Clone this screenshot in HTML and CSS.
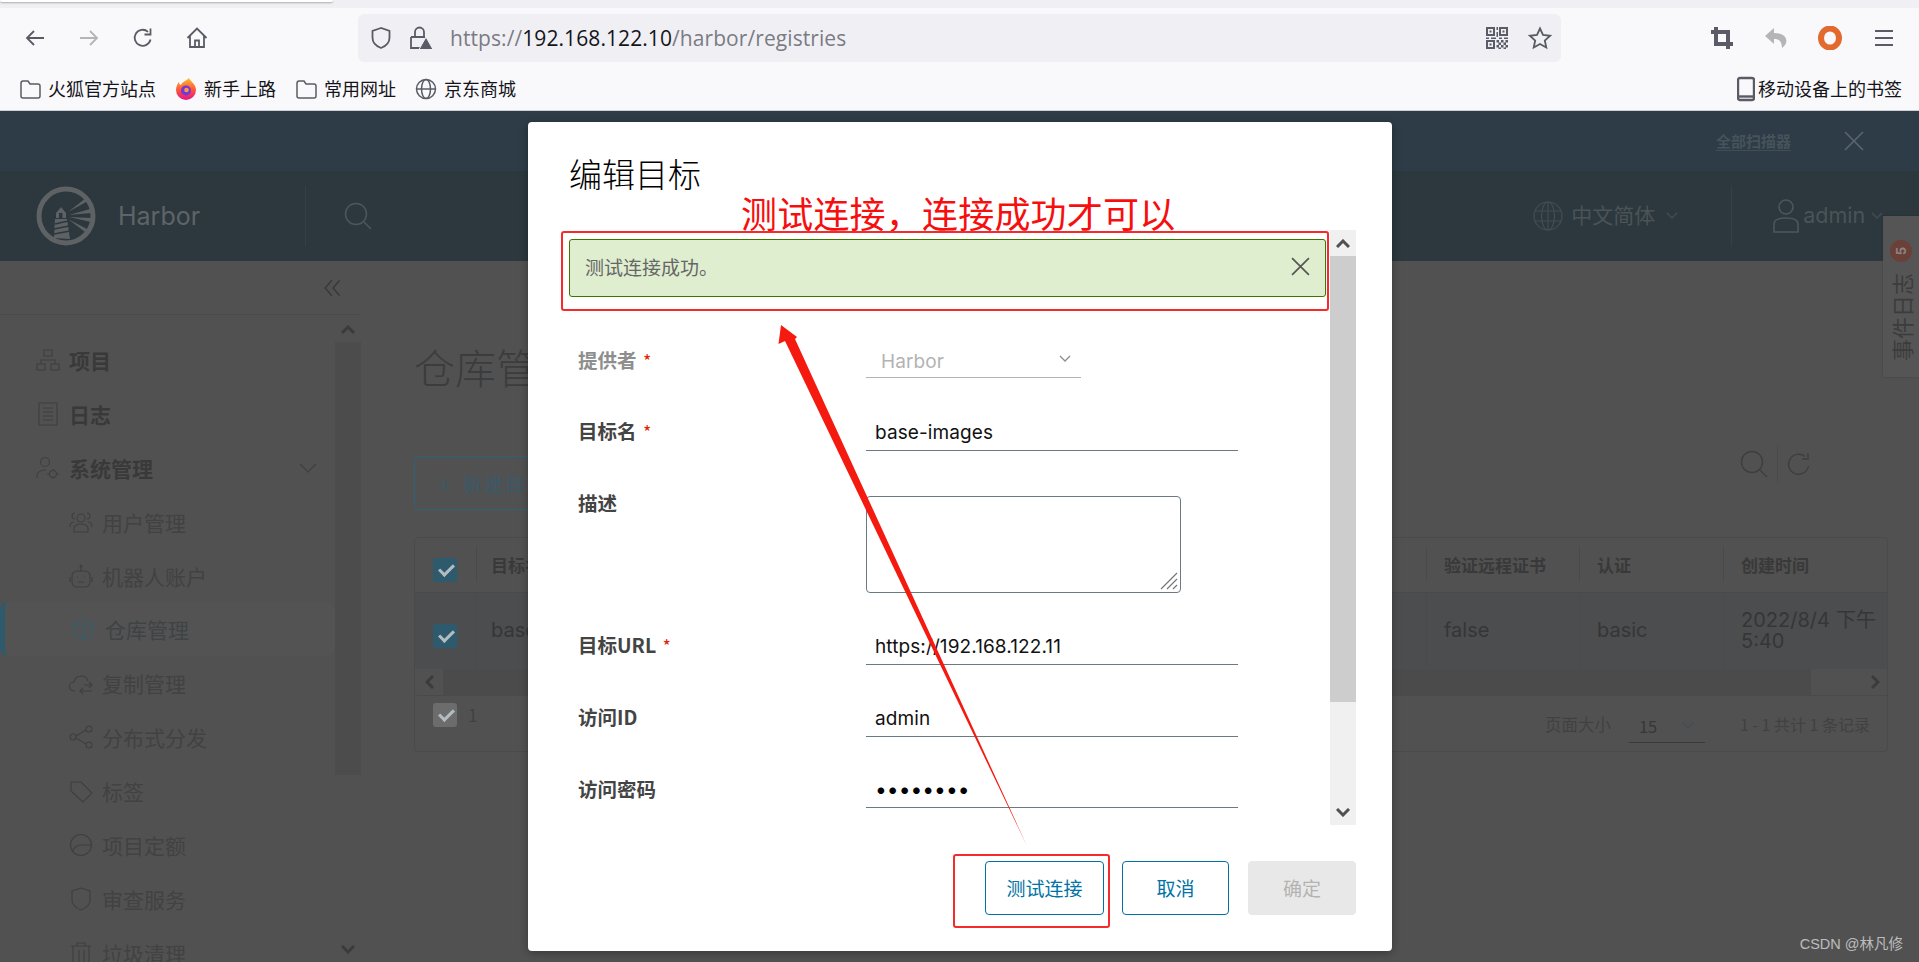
FILE: index.html
```html
<!DOCTYPE html>
<html lang="zh-CN">
<head>
	<meta charset="UTF-8"/>
	<title>Harbor</title>
	<link rel="stylesheet" href="styles.css">
</head>
<body>

<div class="tabstrip"><div class="tab"></div></div>

<!-- Browser toolbar -->
<div class="toolbar">
	<svg class="tb-icon back" viewBox="0 0 24 24"><path d="M21 12H4M11 5l-7 7 7 7"/></svg>
	<svg class="tb-icon fwd" viewBox="0 0 24 24"><path d="M3 12h17M13 5l7 7-7 7"/></svg>
	<svg class="tb-icon reload" viewBox="0 0 24 24"><path d="M19.5 13.5A8 8 0 1 1 17 5.8M19.5 2.5v6h-6"/></svg>
	<svg class="tb-icon home" viewBox="0 0 24 24"><path d="M2.5 12 12 2.500l9.500 9.500M5 10v11h14V10M10 21v-6.500h4V21"/></svg>
	<div class="urlbar">
		<svg class="url-shield" viewBox="0 0 24 24"><path d="M12 2 3.500 4.800v7C3.500 17 8 20.500 12 22c4-1.500 8.500-5 8.500-10.200v-7z"/></svg>
		<svg class="url-lock" viewBox="0 0 24 24"><path d="M6 11V6a4.500 4.500 0 0 1 9 0v5M2 11h14M2 11v11h9"/><path class="fill" d="M17 11 24 23.500H10z"/></svg>
		<span class="url-text"><span class="url-dim">https://</span>192.168.122.10<span class="url-dim">/harbor/registries</span></span>
		<svg class="url-qr" viewBox="0 0 22 22"><path class="fill" d="M0 0h9v9H0zM2 2v5h5V2zM3.500 3.500h2v2h-2zM13 0h9v9h-9zM15 2v5h5V2zM16.500 3.500h2v2h-2zM0 13h9v9H0zM2 15v5h5v-5zM3.500 16.500h2v2h-2zM10.500 0h1.500v3h-1.500zM10.500 5h1.500v5h-1.500zM0 10.500h3V12H0zM5 10.500h5V12H5zM13 10.500h3V12h-3zM18 10.500h4V12h-4zM10.500 13H13v2.500h-2.500zM15 13h2.500v2.500H15zM19.500 13H22v2.500h-2.500zM12.500 15.500H15V18h-2.500zM17.500 15.500H20V18h-2.500zM10.500 18H13v2.500h-2.500zM15 18h2.500v2.500H15zM19.500 18H22v2.500h-2.500zM12.500 20.500H15V22h-2.500zM17.500 20.500H20V22h-2.500z"/></svg>
		<svg class="url-star" viewBox="0 0 24 24"><path d="m12 2.500 3 6.500 7 .8-5.200 4.700 1.500 7L12 18l-6.300 3.500 1.500-7L2 9.800 9 9z"/></svg>
	</div>
	<svg class="tb-solid crop" viewBox="0 0 24 24"><path d="M6 1v17h17M1 6h17v17" fill="none" stroke="#5b5b66" stroke-width="4"/></svg>
	<svg class="tb-solid undo" viewBox="0 0 24 24"><path d="M10 2 1 10l9 8v-5c5 0 8 2 8 9 4-3 5-6 4-9-1-4-6-6-12-6z" fill="#b4b4b9"/></svg>
	<svg class="tb-solid ublock" viewBox="0 0 24 24"><ellipse cx="12" cy="12" rx="9" ry="9.500" fill="none" stroke="#e36a2e" stroke-width="6"/></svg>
	<svg class="tb-solid menu" viewBox="0 0 24 24"><path d="M3 5h18M3 12h18M3 19h18" fill="none" stroke="#5b5b66" stroke-width="2"/></svg>
</div>

<!-- Bookmarks -->
<div class="bookmarks">
	<span class="bm"><svg viewBox="0 0 22 22"><path d="M2 5.500c0-1.500.8-2.500 2-2.500h5l2 3h8c1.200 0 2 .8 2 2v10c0 1.200-.8 2-2 2H4c-1.200 0-2-.8-2-2z"/></svg>火狐官方站点</span>
	<span class="bm"><svg viewBox="0 0 22 22" class="firefox"><defs><linearGradient id="fx" x1="0" y1="0" x2="0" y2="1"><stop offset="0" stop-color="#ffbd2e"/><stop offset=".5" stop-color="#ff5a36"/><stop offset="1" stop-color="#e31587"/></linearGradient></defs><path d="M14 0c1 3 7 6 7 12a10 10 0 0 1-20 0C1 8 3 5 4 4c0 2 1 3 2 3 1-3 5-4 8-7z" fill="url(#fx)" stroke="none"/><circle cx="11" cy="12.500" r="5" fill="#7139d8" stroke="none"/><circle cx="11.500" cy="12" r="2.300" fill="#ff9640" stroke="none"/></svg>新手上路</span>
	<span class="bm"><svg viewBox="0 0 22 22"><path d="M2 5.500c0-1.500.8-2.500 2-2.500h5l2 3h8c1.200 0 2 .8 2 2v10c0 1.200-.8 2-2 2H4c-1.200 0-2-.8-2-2z"/></svg>常用网址</span>
	<span class="bm"><svg viewBox="0 0 22 22"><circle cx="11" cy="11" r="9.500"/><ellipse cx="11" cy="11" rx="4.500" ry="9.500"/><path d="M1.500 11h19"/></svg>京东商城</span>
	<span class="bm bm-mobile"><svg viewBox="0 0 18 26"><path class="mob" d="M3 2h12a2 2 0 0 1 2 2v18a2 2 0 0 1-2 2H3a2 2 0 0 1-2-2V4a2 2 0 0 1 2-2z"/><path class="mob" d="M1 20.500h16" /></svg>移动设备上的书签</span>
</div>

<!-- Harbor behind the dialog -->
<div class="banner">
	<a class="banner-link">全部扫描器</a>
	<svg class="banner-close" viewBox="0 0 20 20"><path d="M1 1l18 18M19 1 1 19"/></svg>
</div>

<header class="app-header">
	<svg class="logo" viewBox="0 0 60 60">
		<circle cx="30" cy="30" r="27" fill="none" stroke="#5e6264" stroke-width="5"/>
		<path d="M20 27l5-6 5 6v5h-10zM19 33h12l3 20-16-1z" fill="#5e6264"/>
		<rect x="23" y="27" width="3.500" height="5" fill="#2c383f"/>
		<path d="M19 38l13-3M18 43l15-3M18 48l16-3" stroke="#2c383f" stroke-width="1.500"/>
		<path d="M32 26 50 12l2 3zM33 29l21-6 1 4zM33 31l22 1v4zM32 33l19 10-2 3z" fill="#5e6264"/>
	</svg>
	<span class="brand">Harbor</span>
	<span class="hdr-divider"></span>
	<svg class="hdr-search" viewBox="0 0 28 28"><circle cx="12" cy="12" r="10.500"/><path d="m20 20 7 7"/></svg>
	<svg class="hdr-globe" viewBox="0 0 30 30"><circle cx="15" cy="15" r="14"/><ellipse cx="15" cy="15" rx="6.500" ry="14"/><path d="M15 1v28M2 10h26M2 20h26"/></svg>
	<span class="hdr-lang">中文简体</span>
	<svg class="chev hdr-chev1" viewBox="0 0 12 8"><path d="m1 1 5 5 5-5"/></svg>
	<span class="hdr-divider second"></span>
	<svg class="hdr-user" viewBox="0 0 26 36"><circle cx="13" cy="9" r="7"/><path d="M1 34v-8c0-4 5-6 12-6s12 2 12 6v8z"/></svg>
	<span class="hdr-admin">admin</span>
	<svg class="chev hdr-chev2" viewBox="0 0 12 8"><path d="m1 1 5 5 5-5"/></svg>
</header>

<div class="layout">
	<aside class="sidebar">
		<div class="collapse-row">
			<svg viewBox="0 0 18 18"><path d="M8 2 2 9l6 7M15 2 9 9l6 7"/></svg>
		</div>
		<nav class="nav">
			<a class="nav-item top"><svg viewBox="0 0 24 24"><path d="M8 2h8v6H8zM1 16h8v6H1zM15 16h8v6h-8zM5 16v-4h14v4"/></svg>项目</a>
			<a class="nav-item top"><svg viewBox="0 0 24 24"><path d="M3 1h18v22H3zM7 6h10M7 10h10M7 14h10M7 18h10"/></svg>日志</a>
			<a class="nav-item top"><svg viewBox="0 0 24 24"><circle cx="9" cy="6" r="4.500"/><path d="M1 22v-3c0-3 4-5 9-5M17 13v2M17 21v2M13 18h-2M23 18h-2"/><circle cx="17" cy="18" r="3.500"/></svg>系统管理<svg class="nav-chev" viewBox="0 0 18 10"><path d="m1 1 8 8 8-8"/></svg></a>
			<a class="nav-item sub"><svg viewBox="0 0 24 24"><circle cx="12" cy="8" r="4"/><path d="M5 22v-4c0-2 3-4 7-4s7 2 7 4v4zM6 3a3 3 0 0 0 0 6M18 3a3 3 0 0 1 0 6M1 17c0-3 1-5 4-5M23 17c0-3-1-5-4-5"/></svg>用户管理</a>
			<a class="nav-item sub"><svg viewBox="0 0 24 24"><rect x="3" y="7" width="18" height="16" rx="5"/><path d="M12 7V3M1 13v5M23 13v5M9 18h6M8 13h1M15 13h1"/><circle cx="12" cy="2" r="1"/></svg>机器人账户</a>
			<a class="nav-item sub active"><svg viewBox="0 0 24 24"><path d="M12 1 2 6v12l10 5 10-5V6zM2 6l10 5 10-5M12 11v12"/></svg>仓库管理</a>
			<a class="nav-item sub"><svg viewBox="0 0 24 24"><path d="M6 20H5a4 4 0 0 1 0-9c1-4 4-6 7-6 3 0 6 2 7 5M23 20H11M14 17l-3 3 3 3M23 14H15M20 11l3 3-3 3"/></svg>复制管理</a>
			<a class="nav-item sub"><svg viewBox="0 0 24 24"><circle cx="4" cy="12" r="3"/><circle cx="20" cy="4" r="3"/><circle cx="20" cy="20" r="3"/><path d="m7 11 10-6M7 13l10 6"/></svg>分布式分发</a>
			<a class="nav-item sub"><svg viewBox="0 0 24 24"><path d="M2 3h10l11 11-9 9L2 12zM6.500 7.500h.1"/></svg>标签</a>
			<a class="nav-item sub"><svg viewBox="0 0 24 24"><circle cx="12" cy="12" r="10.500"/><path d="M3 19c2-5 5-7 9-7h10"/></svg>项目定额</a>
			<a class="nav-item sub"><svg viewBox="0 0 24 24"><path d="M12 1 3 4v9c0 5 4 8 9 10 5-2 9-5 9-10V4z"/></svg>审查服务</a>
			<a class="nav-item sub"><svg viewBox="0 0 24 24"><path d="M2 5h20M8 5V2h8v3M4 5v18M20 5v18M10 9v14M15 9v14"/></svg>垃圾清理</a>
		</nav>
		<div class="side-scroll">
			<svg class="bold-chev" viewBox="0 0 14 9"><path d="m1 8 6-6 6 6"/></svg>
			<div class="side-thumb"></div>
			<svg class="bold-chev low" viewBox="0 0 14 9"><path d="m1 1 6 6 6-6"/></svg>
		</div>
	</aside>

	<main class="content">
		<h1 class="page-title">仓库管理</h1>
		<div class="actions">
			<button class="new-btn"><span class="plus">+</span>新建目标</button>
			<span class="actions-right">
				<svg class="act-search" viewBox="0 0 28 28"><circle cx="12" cy="12" r="10.500"/><path d="m20 20 7 7"/></svg>
				<span class="act-divider"></span>
				<svg class="act-refresh" viewBox="0 0 24 24"><path d="M21.500 14A10 10 0 1 1 18 4.500M21 1v6h-6"/></svg>
			</span>
		</div>

		<div class="grid">
			<div class="grid-head">
				<div class="cell cell-check"><span class="check"></span></div>
				<div class="cell cell-name">目标名</div>
				<div class="cell">验证远程证书</div>
				<div class="cell">认证</div>
				<div class="cell">创建时间</div>
			</div>
			<div class="grid-row">
				<div class="cell cell-check"><span class="check"></span></div>
				<div class="cell cell-name">base-images</div>
				<div class="cell">false</div>
				<div class="cell">basic</div>
				<div class="cell">2022/8/4 下午 5:40</div>
			</div>
			<div class="grid-scroll">
				<span class="gs-btn"><svg class="bold-chev" viewBox="0 0 9 14"><path d="M8 1 2 7l6 6"/></svg></span>
				<span class="gs-thumb"></span>
				<span class="gs-btn end"><svg class="bold-chev" viewBox="0 0 9 14"><path d="m1 1 6 6-6 6"/></svg></span>
			</div>
			<div class="grid-foot">
				<span class="check grey"></span>
				<span class="foot-count">1</span>
				<span class="foot-right">
					页面大小
					<span class="page-size">15<svg class="chev" viewBox="0 0 12 8"><path d="m1 1 5 5 5-5"/></svg></span>
					<span class="foot-total">1 - 1 共计 1 条记录</span>
				</span>
			</div>
		</div>
	</main>
</div>

<aside class="event-tab">
	<span class="event-badge">5</span>
	<span class="event-text">事件日志</span>
</aside>

<!-- Dialog -->
<section class="modal">
	<h2 class="modal-title">编辑目标</h2>
	<div class="modal-body">
		<div class="modal-scroll">
			<div class="alert">
				<span>测试连接成功。</span>
				<svg viewBox="0 0 18 18"><path d="M1 1l16 16M17 1 1 17"/></svg>
			</div>
			<form class="form">
				<div class="form-row first">
					<label class="form-label">提供者 <i>*</i></label>
					<div class="select-wrap">
						<select class="select" disabled><option>Harbor</option></select>
						<svg class="chev" viewBox="0 0 12 8"><path d="m1 1 5 5 5-5"/></svg>
					</div>
				</div>
				<div class="form-row name-row">
					<label class="form-label dark">目标名 <i>*</i></label>
					<input class="input" type="text" value="base-images"/>
				</div>
				<div class="form-row area-row">
					<label class="form-label dark">描述</label>
					<div class="area-wrap">
						<textarea class="area"></textarea>
						<svg class="grip" viewBox="0 0 20 20"><path d="M2 18 18 2M8 18 18 8M14 18l4-4"/></svg>
					</div>
				</div>
				<div class="form-row">
					<label class="form-label dark">目标URL <i>*</i></label>
					<input class="input" type="text" value="https://192.168.122.11"/>
				</div>
				<div class="form-row">
					<label class="form-label dark">访问ID</label>
					<input class="input" type="text" value="admin"/>
				</div>
				<div class="form-row pass-row">
					<label class="form-label dark">访问密码</label>
					<input class="input pass" type="password" value="12345678"/>
				</div>
			</form>
		</div>
		<div class="modal-bar">
			<span class="bar-btn"><svg class="bold-chev" viewBox="0 0 14 9"><path d="m1 8 6-6 6 6"/></svg></span>
			<span class="bar-thumb"></span>
			<span class="bar-btn low"><svg class="bold-chev" viewBox="0 0 14 9"><path d="m1 1 6 6 6-6"/></svg></span>
		</div>
	</div>
	<div class="modal-foot">
		<button class="btn">测试连接</button>
		<button class="btn narrow">取消</button>
		<button class="btn wide disabled">确定</button>
	</div>
</section>

<!-- Red marks drawn on the screenshot -->
<div class="note">测试连接，连接成功才可以</div>
<div class="mark mark-alert"></div>
<div class="mark mark-btn"></div>
<svg class="arrow" viewBox="0 0 1919 962"><path d="M781 325 797 337 795 339 1027 846 785 341 778.500 344z"/></svg>

<div class="watermark">CSDN @林凡修</div>

</body>
</html>
```

FILE: styles.css
```css
* {
    box-sizing: border-box;
}

html, body {
    margin: 0;
    height: 100%;
}

body {
    position: relative;
    width: 1919px;
    height: 962px;
    overflow: hidden;
    background-color: #515151;
    font-family: "Noto Sans CJK SC", "Noto Sans", sans-serif;
    color: #15141a;
}

svg {
    display: block;
    flex: none;
}

a {
    text-decoration: none;
}

/* Browser chrome */
.tabstrip {
    height: 8px;
    background-color: #f0f0f4;
}

.tab {
    width: 333px;
    height: 2px;
    background: #fff;
    border-radius: 0 0 4px 4px;
    box-shadow: 0 1px 2px rgba(0, 0, 0, 0.3);
}

.toolbar {
    display: flex;
    align-items: center;
    height: 62px;
    padding: 6px 0 8px 23px;
    background-color: #f9f9fb;
}

.tb-icon {
    width: 24px;
    height: 24px;
    margin-right: 30px;
    fill: none;
    stroke: #5b5b66;
    stroke-width: 1.8;
}

.tb-icon.fwd {
    stroke: #b4b4b9;
}

.tb-icon.home {
    margin-right: 0;
}

.urlbar {
    display: flex;
    align-items: center;
    width: 1203px;
    height: 48px;
    margin-left: 149px;
    padding-left: 11px;
    background-color: #f0f0f4;
    border-radius: 6px;
}

.url-shield, .url-lock, .url-star {
    width: 24px;
    height: 24px;
    fill: none;
    stroke: #5b5b66;
    stroke-width: 1.8;
}

.url-lock {
    margin-left: 16px;
}

.url-lock .fill {
    fill: #5b5b66;
    stroke: #f0f0f4;
    stroke-width: 1;
}

.url-text {
    margin-left: 17px;
    font-family: "Open Sans", sans-serif;
    font-size: 21px;
    letter-spacing: 0.08px;
    white-space: nowrap;
}

.url-dim {
    color: #7b7b84;
}

.url-qr {
    width: 22px;
    height: 22px;
    margin-left: auto;
    fill: #5b5b66;
    fill-rule: evenodd;
}

.url-star {
    margin: 0 9px 0 20px;
}

.tb-solid {
    width: 24px;
    height: 24px;
    margin-left: 30px;
}

.tb-solid.crop {
    margin-left: 149px;
}

.bookmarks {
    display: flex;
    align-items: flex-start;
    height: 41px;
    padding: 5px 17px 0 19px;
    background-color: #f9f9fb;
    border-bottom: 1px solid #cfcfd8;
    font-size: 18px;
    line-height: 27px;
}

.bm {
    display: flex;
    align-items: center;
    gap: 7px;
    margin-right: 19px;
    white-space: nowrap;
}

.bm svg {
    width: 22px;
    height: 22px;
    fill: none;
    stroke: #5b5b66;
    stroke-width: 1.5;
}

.bm-mobile {
    gap: 3px;
    margin: 0 0 0 auto;
}

.bm-mobile svg {
    width: 18px;
    height: 26px;
    stroke-width: 2.4;
}

/* Harbor header, dimmed by the dialog backdrop */
.banner {
    display: flex;
    align-items: center;
    justify-content: flex-end;
    height: 60px;
    padding: 0 55px 0 0;
    background-color: #2d3c46;
}

.banner-link {
    margin-right: 53px;
    font-size: 15px;
    font-weight: 700;
    line-height: 18px;
    border-bottom: 1px solid #414e56;
    color: #46535b;
}

.banner-close {
    width: 20px;
    height: 20px;
    fill: none;
    stroke: #5b666d;
    stroke-width: 1.6;
}

.app-header {
    display: flex;
    align-items: center;
    height: 90px;
    padding-left: 36px;
    background-color: #2c383e;
    color: #4a5358;
}

.logo {
    width: 60px;
    height: 60px;
}

.brand {
    margin-left: 22px;
    font-family: "Inter", sans-serif;
    font-size: 25px;
    color: #5e6467;
}

.hdr-divider {
    width: 1px;
    height: 60px;
    margin-left: 105px;
    background-color: #344047;
}

.hdr-divider.second {
    margin-left: 53px;
}

.hdr-search {
    width: 28px;
    height: 28px;
    margin-left: 38px;
    fill: none;
    stroke: #4d565b;
    stroke-width: 1.5;
}

.hdr-globe {
    width: 30px;
    height: 30px;
    margin-left: 1161px;
    fill: none;
    stroke: #434d52;
    stroke-width: 1.2;
}

.hdr-lang {
    margin: -4px 0 0 8px;
    font-size: 21px;
}

.chev {
    width: 12px;
    height: 8px;
    fill: none;
    stroke: #434d52;
    stroke-width: 1.3;
}

.hdr-chev1 {
    margin-left: 11px;
}

.hdr-user {
    width: 26px;
    height: 36px;
    margin-left: 41px;
    fill: none;
    stroke: #4d565b;
    stroke-width: 1.6;
}

.hdr-admin {
    margin: -2px 0 0 4px;
    font-family: "Inter", sans-serif;
    font-size: 21.5px;
}

.hdr-chev2 {
    margin-left: 6px;
}

/* Left navigation and content */
.layout {
    display: flex;
    height: 701px;
    overflow: hidden;
}

.sidebar {
    position: relative;
    width: 361px;
    flex: none;
    color: #3d3d3d;
}

.collapse-row {
    display: flex;
    align-items: center;
    justify-content: flex-end;
    height: 54px;
    padding-right: 18px;
    border-bottom: 1px solid #4a4a4a;
}

.collapse-row svg {
    width: 20px;
    height: 20px;
    fill: none;
    stroke: #3a3a3a;
    stroke-width: 1.4;
}

.nav {
    width: 335px;
    padding-top: 18px;
}

.nav-item {
    display: flex;
    align-items: center;
    height: 53.9px;
    white-space: nowrap;
}

.nav-item svg {
    width: 24px;
    height: 24px;
    fill: none;
    stroke: #3f3f3f;
    stroke-width: 1.1;
}

.nav-item.top {
    gap: 9px;
    padding-left: 36px;
    font-size: 21px;
    font-weight: 700;
    color: #393939;
}

.nav-item.sub {
    gap: 9px;
    padding-left: 69px;
    font-size: 21px;
    color: #424242;
}

.nav-item.active {
    padding-left: 67px;
    background-color: #525352;
    border-left: 5px solid #2f5a6e;
    border-radius: 8px;
    color: #3f4345;
}

.nav-item.active svg {
    width: 22px;
    height: 24px;
    margin-right: 2px;
    stroke: #2f6277;
    stroke-width: 1;
}

.nav-item svg.nav-chev {
    width: 18px;
    height: 10px;
    margin-left: auto;
    margin-right: 18px;
}

.side-scroll {
    position: absolute;
    top: 54px;
    right: 0;
    bottom: 0;
    width: 26px;
    padding-top: 10px;
}

.side-thumb {
    height: 433px;
    margin-top: 8px;
    background-color: #4c4c4c;
}

.bold-chev {
    width: 14px;
    height: 9px;
    margin: 0 auto;
    fill: none;
    stroke: #3b3b3b;
    stroke-width: 3;
}

.side-scroll .low {
    margin-top: 170px;
}

.content {
    flex: 1;
    padding: 0 31px 0 53px;
}

.page-title {
    height: 146px;
    margin: 0;
    padding-top: 75px;
    font-size: 41px;
    font-weight: 300;
    line-height: 60px;
    color: #3c3c3c;
}

.actions {
    position: relative;
    display: flex;
    align-items: flex-start;
    justify-content: space-between;
    height: 54px;
    margin-top: 49px;
}

.new-btn {
    display: flex;
    align-items: center;
    height: 54px;
    padding: 0 22px;
    background: none;
    border: 1px solid #30617a;
    border-radius: 4px;
    font-family: inherit;
    font-size: 19px;
    letter-spacing: 2px;
    color: #3a5a6a;
}

.plus {
    margin-right: 9px;
    font-size: 28px;
    font-weight: 300;
    line-height: 1;
}

.actions-right {
    display: flex;
    align-items: center;
    margin: -10px 77px 0 0;
}

.act-search {
    width: 28px;
    height: 28px;
    fill: none;
    stroke: #3e3e3e;
    stroke-width: 1.4;
}

.act-divider {
    width: 1px;
    height: 36px;
    margin: 0 9px;
    background-color: #4a4a4a;
}

.act-refresh {
    width: 24px;
    height: 24px;
    fill: none;
    stroke: #3e3e3e;
    stroke-width: 1.4;
}

.grid {
    width: 1474px;
    margin-top: 27px;
    border: 1px solid #4a4a4a;
    border-radius: 4px;
    overflow: hidden;
}

.grid-head, .grid-row {
    display: grid;
    grid-template-columns: 61px 950px 153px 144px 1fr;
    align-items: center;
}

.grid-head {
    height: 55px;
    padding-bottom: 2px;
    border-bottom: 1px solid #4a4a4a;
    font-size: 17px;
    font-weight: 700;
    color: #393939;
}

.grid-row {
    height: 76px;
    padding-bottom: 1px;
    background-color: #4b4d4f;
    font-family: "Inter", sans-serif;
    font-size: 20px;
    line-height: 21px;
    color: #363636;
}

.cell {
    display: flex;
    align-items: center;
    height: 36px;
    padding-left: 17px;
    border-left: 1px solid #4a4a4a;
}

.grid-row .cell {
    height: 100%;
}

.cell.cell-name {
    padding-left: 14px;
}

.cell-check {
    padding: 11px 0 0 18px;
    border-left: none;
}

.check {
    position: relative;
    display: block;
    flex: none;
    width: 24px;
    height: 24px;
    background-color: #2e5a6e;
    border-radius: 3px;
}

.check::after {
    content: "";
    position: absolute;
    left: 6px;
    top: 6px;
    width: 12px;
    height: 6px;
    border-left: 3px solid #b3bcc0;
    border-bottom: 3px solid #b3bcc0;
    transform: rotate(-45deg);
}

.check.grey {
    align-self: flex-start;
    margin-top: 7px;
    background-color: #6c6c6c;
}

.grid-scroll {
    display: flex;
    height: 27px;
    border-bottom: 1px solid #4a4a4a;
}

.gs-btn {
    display: flex;
    align-items: center;
    justify-content: center;
    width: 28px;
}

.gs-btn.end {
    width: 76px;
    justify-content: flex-end;
    padding-right: 7px;
}

.gs-btn svg {
    width: 9px;
    height: 14px;
    margin: 0;
}

.gs-thumb {
    flex: 1;
    background-color: #4b4b4b;
}

.grid-foot {
    display: flex;
    align-items: center;
    height: 55px;
    padding: 0 17px 0 18px;
    font-size: 16.5px;
    color: #414141;
}

.foot-count {
    align-self: flex-start;
    margin: 6px 0 0 11px;
    font-size: 17px;
}

.foot-right {
    display: flex;
    align-items: center;
    margin-left: auto;
}

.foot-total {
    font-size: 16px;
}

.page-size {
    display: flex;
    align-items: center;
    justify-content: space-between;
    width: 76px;
    height: 32px;
    margin: 6px 35px 0 18px;
    padding: 0 11px 0 10px;
    border-bottom: 1px solid #3a3a3a;
    color: #373737;
}

.event-tab {
    position: absolute;
    top: 216px;
    right: 0;
    display: flex;
    flex-direction: column;
    align-items: center;
    gap: 11px;
    width: 36px;
    height: 161px;
    padding-top: 24px;
    background-color: #555;
    box-shadow: 0 0 2px rgba(0, 0, 0, 0.2);
    color: #3c3c3c;
}

.event-badge {
    display: flex;
    align-items: center;
    justify-content: center;
    width: 22px;
    height: 22px;
    border-radius: 50%;
    background-color: #6b4038;
    font-family: "Inter", sans-serif;
    font-size: 13px;
    font-weight: 700;
    color: #8c8480;
    transform: rotate(-90deg);
}

.event-text {
    writing-mode: vertical-rl;
    text-orientation: sideways;
    transform: rotate(180deg);
    font-size: 22px;
    line-height: 24px;
}

/* Dialog */
.modal {
    position: absolute;
    top: 122px;
    left: 528px;
    width: 864px;
    height: 829px;
    padding: 0 36px 0 33px;
    background-color: #fff;
    border-radius: 4px;
    box-shadow: 0 2px 8px rgba(0, 0, 0, 0.3);
}

.modal-title {
    height: 108px;
    margin: 0;
    padding: 28px 0 0 8px;
    font-size: 33px;
    font-weight: 300;
    line-height: 46px;
    color: #000;
}

.modal-body {
    display: flex;
    height: 595px;
}

.modal-scroll {
    flex: 1;
    padding: 9px 4px 0 8px;
}

.modal-bar {
    display: flex;
    flex-direction: column;
    width: 26px;
    background-color: #f0f0f0;
}

.bar-btn {
    display: flex;
    align-items: center;
    justify-content: center;
    height: 26px;
    flex: none;
}

.bar-btn .bold-chev {
    stroke: #505050;
}

.bar-btn.low {
    margin-top: auto;
}

.bar-thumb {
    height: 446px;
    background-color: #cdcdcd;
}

.alert {
    display: flex;
    align-items: center;
    justify-content: space-between;
    height: 58px;
    padding: 0 15px 4px 15px;
    background-color: #dfeecf;
    border: 1px solid #3d7500;
    border-radius: 3px;
    font-size: 19px;
    color: #666;
}

.alert svg {
    width: 19px;
    height: 19px;
    fill: none;
    stroke: #565656;
    stroke-width: 1.6;
}

.form {
    display: flex;
    flex-direction: column;
    gap: 36px;
    padding: 45px 0 0 9px;
}

.form-row {
    display: flex;
    align-items: center;
    height: 36px;
}

.form-row.name-row {
    margin-top: 1px;
}

.form-row.area-row {
    align-items: flex-start;
    height: 97px;
    margin-top: 9px;
}

.form-row.pass-row {
    margin-top: -1px;
}

.form-label {
    width: 288px;
    flex: none;
    font-size: 19.5px;
    font-weight: 700;
    line-height: 24px;
    color: #8e8e8e;
}

.form-label.dark {
    margin-top: -4px;
    color: #444;
}

.area-row .form-label.dark {
    margin-top: -5px;
}

.pass-row .form-label.dark {
    margin-top: -2px;
}

.form-label i {
    margin-left: 2px;
    font-size: 18px;
    font-style: normal;
    font-weight: 400;
    color: #e12200;
}

.select-wrap {
    position: relative;
    width: 215px;
    height: 36px;
}

.select {
    width: 100%;
    height: 100%;
    padding: 3px 0 0 15px;
    appearance: none;
    background: none;
    border: none;
    border-bottom: 1px solid #b3b3b3;
    border-radius: 0;
    font-family: "Inter", sans-serif;
    font-size: 19px;
    letter-spacing: 0.1px;
    color: #b3b3b3;
    opacity: 1;
}

.select-wrap .chev {
    position: absolute;
    top: 13px;
    right: 10px;
    stroke: #8c8c8c;
}

.input {
    width: 372px;
    height: 36px;
    padding: 0 9px;
    border: none;
    border-bottom: 1px solid #6a7a80;
    outline: none;
    font-family: "Inter", sans-serif;
    font-size: 19px;
    letter-spacing: 0.1px;
    color: #111;
}

.input.pass {
    font-size: 21px;
    letter-spacing: 0;
    color: #000;
}

.area-wrap {
    position: relative;
    width: 315px;
    height: 97px;
}

.area {
    display: block;
    width: 100%;
    height: 100%;
    resize: none;
    border: 1px solid #6a7a80;
    border-radius: 4px;
    outline: none;
}

.grip {
    position: absolute;
    right: 2px;
    bottom: 2px;
    width: 20px;
    height: 20px;
    fill: none;
    stroke: #777;
    stroke-width: 1.2;
}

.modal-foot {
    display: flex;
    justify-content: flex-end;
    gap: 18px;
    padding-top: 36px;
}

.btn {
    width: 119px;
    height: 54px;
    padding: 0 0 2px;
    background-color: #fff;
    border: 1px solid #0072a3;
    border-radius: 4px;
    font-family: inherit;
    font-size: 19px;
    color: #0072a3;
}

.btn.narrow {
    width: 107px;
    margin-right: 1px;
}

.btn.wide {
    width: 108px;
}

.btn.disabled {
    background-color: #e8e8e8;
    border-color: #e8e8e8;
    color: #b3b3b3;
}

/* Annotations */
.note {
    position: absolute;
    top: 186px;
    left: 741px;
    font-size: 36px;
    line-height: 52px;
    letter-spacing: 0.2px;
    color: #f60f0f;
    white-space: nowrap;
}

.mark {
    position: absolute;
    border: 2px solid #f62a2a;
    border-radius: 3px;
}

.mark-alert {
    top: 231px;
    left: 561px;
    width: 768px;
    height: 80px;
}

.mark-btn {
    top: 854px;
    left: 953px;
    width: 157px;
    height: 74px;
}

.arrow {
    position: absolute;
    top: 0;
    left: 0;
    width: 1919px;
    height: 962px;
    pointer-events: none;
    fill: #f51a10;
}

.watermark {
    position: absolute;
    right: 16px;
    bottom: 9px;
    font-family: "Liberation Sans", "Noto Sans CJK SC", sans-serif;
    font-size: 14.5px;
    line-height: 18px;
    color: #bdbdbd;
}
```
